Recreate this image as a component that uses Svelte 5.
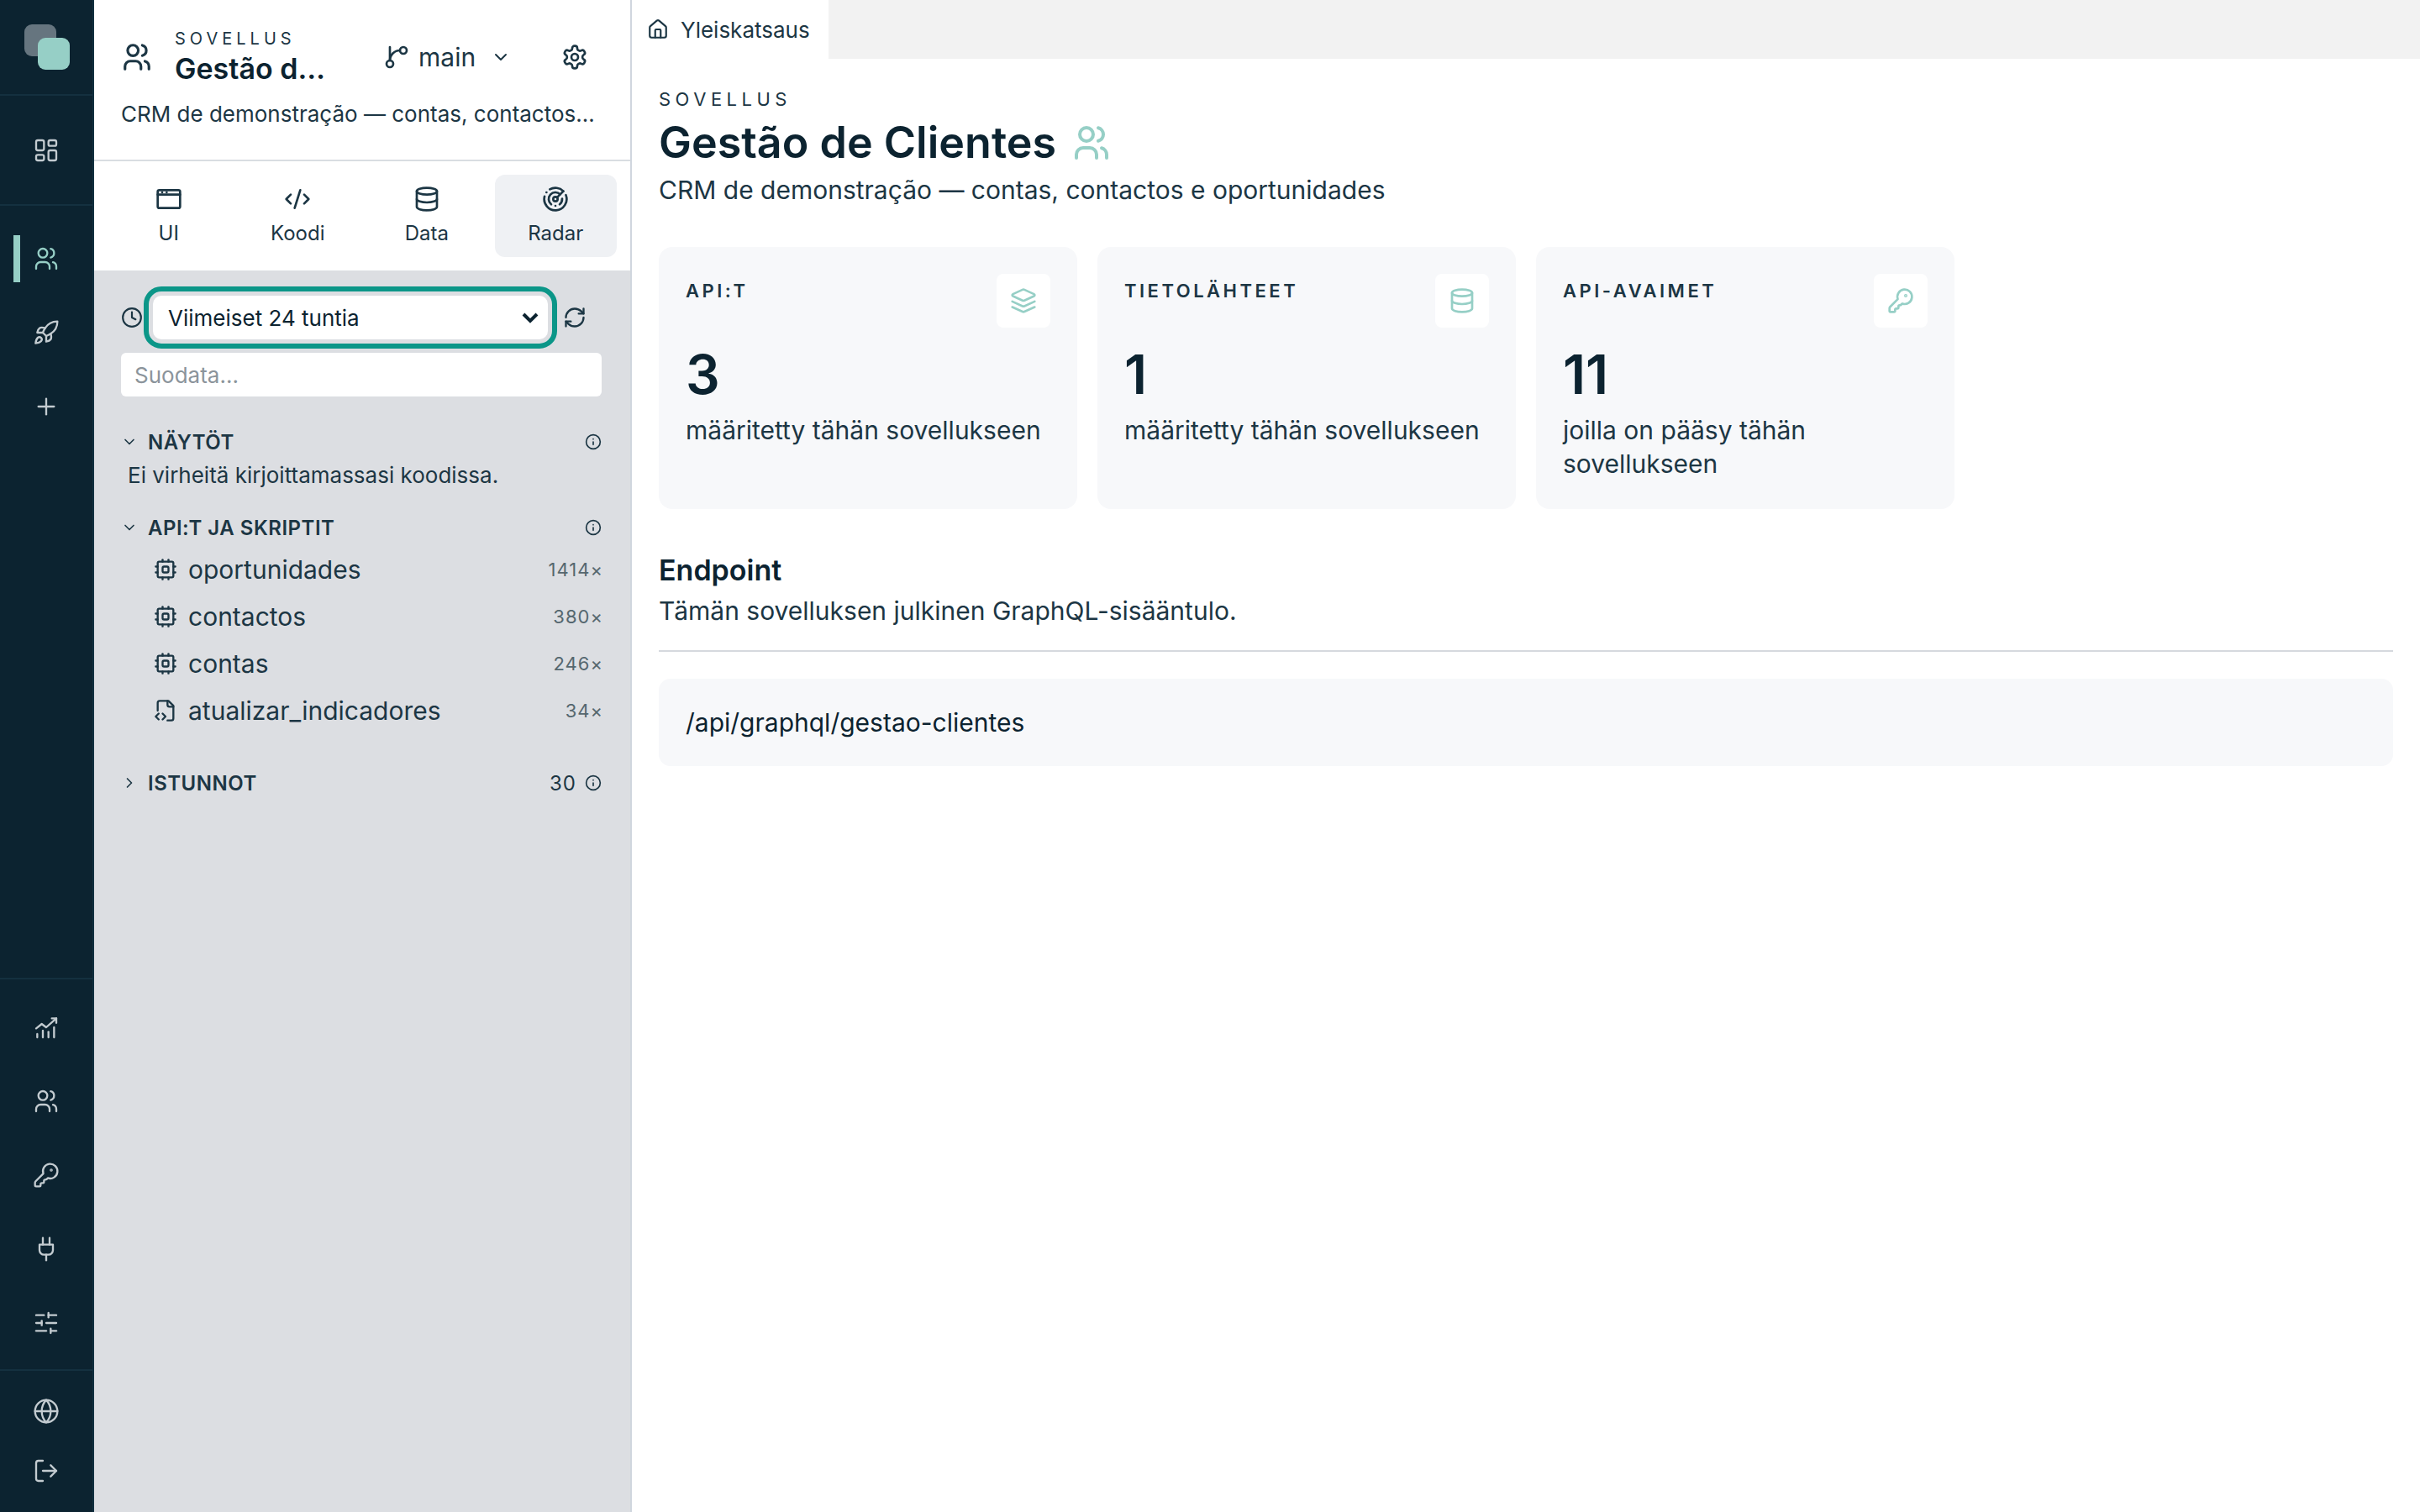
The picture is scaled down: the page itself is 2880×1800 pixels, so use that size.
<script lang="ts">
  const icons: Record<string, string[]> = {
    dashboard: ['R3 3 7 9', 'R14 3 7 5', 'R14 12 7 9', 'R3 16 7 5'],
    users: ['M3 21v-2a4 4 0 0 1 4-4h4a4 4 0 0 1 4 4v2', 'C9 7 4', 'M16 3.13a4 4 0 0 1 0 7.75', 'M21 21v-2a4 4 0 0 0-3-3.85'],
    rocket: [
      'M4.5 16.5c-1.5 1.26-2 5-2 5s3.74-.5 5-2c.71-.84.7-2.13-.09-2.91a2.18 2.18 0 0 0-2.91-.09z',
      'm12 15-3-3a22 22 0 0 1 2-3.95A12.88 12.88 0 0 1 22 2c0 2.72-.78 7.5-6 11a22.35 22.35 0 0 1-4 2z',
      'M9 12H4s.55-3.03 2-4c1.62-1.08 5 0 5 0',
      'M12 15v5s3.03-.55 4-2c1.08-1.62 0-5 0-5'
    ],
    plus: ['M5 12h14', 'M12 5v14'],
    chart: ['M3 13l5-4 4 3 9-8', 'M17 4h4v4', 'M4 21v-3', 'M9 21v-6', 'M14 21v-5', 'M19 21v-9'],
    key: [
      'M2.586 17.414A2 2 0 0 0 2 18.828V21a1 1 0 0 0 1 1h3a1 1 0 0 0 1-1v-1a1 1 0 0 1 1-1h1a1 1 0 0 0 1-1v-1a1 1 0 0 1 1-1h.172a2 2 0 0 0 1.414-.586l.814-.814a6.5 6.5 0 1 0-4-4z',
      'C16.5 7.5 .5'
    ],
    plug: ['M12 22v-5', 'M9 8V2', 'M15 8V2', 'M18 8v5a4 4 0 0 1-4 4h-4a4 4 0 0 1-4-4V8Z'],
    sliders: ['M21 5h-7', 'M10 5H3', 'M21 12h-9', 'M8 12H3', 'M21 19h-5', 'M12 19H3', 'M14 3v4', 'M8 10v4', 'M16 17v4'],
    globe: ['C12 12 10', 'M12 2a14.5 14.5 0 0 0 0 20 14.5 14.5 0 0 0 0-20', 'M2 12h20'],
    logout: ['M9 21H5a2 2 0 0 1-2-2V5a2 2 0 0 1 2-2h4', 'm16 17 5-5-5-5', 'M21 12H9'],
    branch: ['M6 15V3', 'C6 18 3', 'C18 6 3', 'M15 6a9 9 0 0 0-9 9'],
    chevronDown: ['m6 9 6 6 6-6'],
    chevronRight: ['m9 18 6-6-6-6'],
    gear: [
      'M12.22 2h-.44a2 2 0 0 0-2 2v.18a2 2 0 0 1-1 1.73l-.43.25a2 2 0 0 1-2 0l-.15-.08a2 2 0 0 0-2.73.73l-.22.38a2 2 0 0 0 .73 2.73l.15.1a2 2 0 0 1 1 1.72v.51a2 2 0 0 1-1 1.74l-.15.09a2 2 0 0 0-.73 2.73l.22.38a2 2 0 0 0 2.73.73l.15-.08a2 2 0 0 1 2 0l.43.25a2 2 0 0 1 1 1.73V20a2 2 0 0 0 2 2h.44a2 2 0 0 0 2-2v-.18a2 2 0 0 1 1-1.73l.43-.25a2 2 0 0 1 2 0l.15.08a2 2 0 0 0 2.73-.73l.22-.39a2 2 0 0 0-.73-2.73l-.15-.08a2 2 0 0 1-1-1.74v-.5a2 2 0 0 1 1-1.74l.15-.09a2 2 0 0 0 .73-2.73l-.22-.38a2 2 0 0 0-2.73-.73l-.15.08a2 2 0 0 1-2 0l-.43-.25a2 2 0 0 1-1-1.73V4a2 2 0 0 0-2-2z',
      'C12 12 3'
    ],
    window: ['R2 4 20 16', 'M2 8h20', 'M6 6h.01', 'M10 6h.01'],
    code: ['m18 16 4-4-4-4', 'm6 8-4 4 4 4', 'm14.5 4-5 16'],
    database: ['M3 5a9 3 0 1 0 18 0a9 3 0 1 0-18 0', 'M3 5V19A9 3 0 0 0 21 19V5', 'M3 12A9 3 0 0 0 21 12'],
    radar: [
      'M19.07 4.93A10 10 0 0 0 6.99 3.34',
      'M4 6h.01',
      'M2.29 9.62A10 10 0 1 0 21.31 8.35',
      'M16.24 7.76A6 6 0 1 0 8.23 16.67',
      'M12 18h.01',
      'M17.99 11.66A6 6 0 0 1 15.77 16.67',
      'C12 12 2',
      'm13.41 10.59 5.66-5.66'
    ],
    clock: ['C12 12 10', 'M12 6v6l4 2'],
    refresh: ['M3 12a9 9 0 0 1 9-9 9.75 9.75 0 0 1 6.74 2.74L21 8', 'M21 3v5h-5', 'M21 12a9 9 0 0 1-9 9 9.75 9.75 0 0 1-6.74-2.74L3 16', 'M8 16H3v5'],
    info: ['C12 12 10', 'M12 16v-4', 'M12 8h.01'],
    cpu: ['R4 4 16 16', 'R9 9 6 6', 'M15 2v2', 'M15 20v2', 'M2 15h2', 'M2 9h2', 'M20 15h2', 'M20 9h2', 'M9 2v2', 'M9 20v2'],
    fileCode: ['M4 12V4a2 2 0 0 1 2-2h9l5 5v13a2 2 0 0 1-2 2h-4', 'M14 2v4a2 2 0 0 0 2 2h4', 'm5 15-3 3 3 3', 'm9 21 3-3-3-3'],
    home: ['M15 21v-8a1 1 0 0 0-1-1h-4a1 1 0 0 0-1 1v8', 'M3 10a2 2 0 0 1 .709-1.528l7-5.999a2 2 0 0 1 2.582 0l7 5.999A2 2 0 0 1 21 10v9a2 2 0 0 1-2 2H5a2 2 0 0 1-2-2z'],
    layers: [
      'm12.83 2.18a2 2 0 0 0-1.66 0L2.6 6.08a1 1 0 0 0 0 1.83l8.58 3.91a2 2 0 0 0 1.66 0l8.58-3.9a1 1 0 0 0 0-1.83Z',
      'm22 17.65-9.17 4.16a2 2 0 0 1-1.66 0L2 17.65',
      'm22 12.65-9.17 4.16a2 2 0 0 1-1.66 0L2 12.65'
    ]
  };

  const tabs = [
    { icon: 'window', label: 'UI' },
    { icon: 'code', label: 'Koodi' },
    { icon: 'database', label: 'Data' },
    { icon: 'radar', label: 'Radar', active: true }
  ];

  const apis = [
    { icon: 'cpu', name: 'oportunidades', count: '1414×' },
    { icon: 'cpu', name: 'contactos', count: '380×' },
    { icon: 'cpu', name: 'contas', count: '246×' },
    { icon: 'fileCode', name: 'atualizar_indicadores', count: '34×' }
  ];

  const cards = [
    { label: 'API:T', icon: 'layers', value: '3', text: 'määritetty tähän sovellukseen' },
    { label: 'TIETOLÄHTEET', icon: 'database', value: '1', text: 'määritetty tähän sovellukseen' },
    { label: 'API-AVAIMET', icon: 'key', value: '11', text: 'joilla on pääsy tähän sovellukseen' }
  ];

  const toolIcons = ['chart', 'users', 'key', 'plug', 'sliders'];
</script>

{#snippet icon(name: string, size: number, stroke = 2)}
  <svg width={size} height={size} viewBox="0 0 24 24" fill="none" stroke="currentColor" stroke-width={stroke} stroke-linecap="round" stroke-linejoin="round">
    {#each icons[name] as d}
      {#if d[0] === 'C'}
        {@const c = d.slice(1).trim().split(' ')}
        <circle cx={c[0]} cy={c[1]} r={c[2]} />
      {:else if d[0] === 'R'}
        {@const r = d.slice(1).trim().split(' ')}
        <rect x={r[0]} y={r[1]} width={r[2]} height={r[3]} rx="1.5" />
      {:else}
        <path {d} />
      {/if}
    {/each}
  </svg>
{/snippet}

{#snippet sectionHead(open: boolean, title: string, count?: string)}
  <div class="sec-head">
    <span class="sec-chev">{@render icon(open ? 'chevronDown' : 'chevronRight', 20, 2)}</span>
    <span class="sec-title">{title}</span>
    {#if count}<span class="sec-count">{count}</span>{/if}
    <span class="sec-info">{@render icon('info', 20, 2)}</span>
  </div>
{/snippet}

<div class="app">
  <nav class="rail">
    <div class="rail-logo">
      <span class="logo-back"></span>
      <span class="logo-front"></span>
    </div>
    <div class="rail-dash">
      <span class="rail-item">{@render icon('dashboard', 32, 1.75)}</span>
    </div>
    <div class="rail-main">
      <span class="rail-item rail-item--active">{@render icon('users', 32, 1.75)}</span>
      <span class="rail-item">{@render icon('rocket', 32, 1.75)}</span>
      <span class="rail-item">{@render icon('plus', 32, 1.75)}</span>
    </div>
    <div class="rail-tools">
      {#each toolIcons as t}
        <span class="rail-item">{@render icon(t, 32, 1.75)}</span>
      {/each}
    </div>
    <div class="rail-foot">
      <span class="rail-item rail-item--short">{@render icon('globe', 32, 1.75)}</span>
      <span class="rail-item rail-item--short">{@render icon('logout', 32, 1.75)}</span>
    </div>
  </nav>

  <aside class="side">
    <header class="side-head">
      <div class="side-top">
        <span class="side-users">{@render icon('users', 38, 2)}</span>
        <div class="side-name">
          <div class="eyebrow">SOVELLUS</div>
          <div class="side-title">Gestão de Clientes</div>
        </div>
        <div class="branch">
          {@render icon('branch', 32, 2)}
          <span>main</span>
          <span class="branch-chev">{@render icon('chevronDown', 24, 2)}</span>
        </div>
        <span class="gear">{@render icon('gear', 32, 2)}</span>
      </div>
      <div class="side-desc">CRM de demonstração — contas, contactos e oportunidades</div>
    </header>

    <div class="tabs">
      {#each tabs as t}
        <div class="tab" class:tab--active={t.active}>
          {@render icon(t.icon, 32, 2)}
          <span>{t.label}</span>
        </div>
      {/each}
    </div>

    <div class="radar">
      <div class="range">
        <span class="range-clock">{@render icon('clock', 26, 2)}</span>
        <div class="select-wrap">
          <select class="select">
            <option>Viimeiset 24 tuntia</option>
          </select>
          <svg class="select-arrow" width="20" height="14" viewBox="0 0 20 14" fill="none" stroke="currentColor" stroke-width="4">
            <path d="M2 3l8 8 8-8" />
          </svg>
        </div>
        <span class="refresh">{@render icon('refresh', 28, 2)}</span>
      </div>
      <input class="filter" placeholder="Suodata..." />

      <section class="sec sec--first">
        {@render sectionHead(true, 'NÄYTÖT')}
        <p class="sec-empty">Ei virheitä kirjoittamassasi koodissa.</p>
      </section>

      <section class="sec sec--api">
        {@render sectionHead(true, 'API:T JA SKRIPTIT')}
        <ul class="rows">
          {#each apis as a}
            <li class="row">
              {@render icon(a.icon, 28, 2)}
              <span class="row-name">{a.name}</span>
              <span class="row-count">{a.count}</span>
            </li>
          {/each}
        </ul>
      </section>

      <section class="sec sec--sessions">
        {@render sectionHead(false, 'ISTUNNOT', '30')}
      </section>
    </div>
  </aside>

  <main class="main">
    <div class="tabbar">
      <div class="doc-tab">
        {@render icon('home', 26, 2)}
        <span>Yleiskatsaus</span>
      </div>
    </div>
    <div class="content">
      <div class="eyebrow eyebrow--main">SOVELLUS</div>
      <h1 class="title">
        Gestão de Clientes
        <span class="title-icon">{@render icon('users', 48, 2)}</span>
      </h1>
      <p class="lead">CRM de demonstração — contas, contactos e oportunidades</p>

      <div class="cards">
        {#each cards as c}
          <article class="card">
            <div class="card-top">
              <span class="card-label">{c.label}</span>
              <span class="card-icon">{@render icon(c.icon, 32, 2)}</span>
            </div>
            <div class="card-value">{c.value}</div>
            <p class="card-text">{c.text}</p>
          </article>
        {/each}
      </div>

      <h2 class="h2">Endpoint</h2>
      <p class="h2-sub">Tämän sovelluksen julkinen GraphQL-sisääntulo.</p>
      <div class="endpoint">/api/graphql/gestao-clientes</div>
    </div>
  </main>
</div>

<style>
  :global(body) {
    margin: 0;
    background: #fff;
  }

  .app {
    display: flex;
    width: 2880px;
    height: 1800px;
    overflow: hidden;
    font-family: Inter, 'Liberation Sans', sans-serif;
    color: #1c3644;
  }

  /* Rail */
  .rail {
    flex: none;
    width: 112px;
    box-sizing: border-box;
    display: flex;
    flex-direction: column;
    background: #0c2330;
    border-right: 2px solid #12303f;
    color: #c3cbd0;
  }

  .rail-logo {
    position: relative;
    height: 112px;
    flex: none;
    border-bottom: 2px solid #14303f;
  }

  .logo-back,
  .logo-front {
    position: absolute;
    width: 38px;
    height: 38px;
    border-radius: 9px;
  }

  .logo-back {
    left: 29px;
    top: 29px;
    background: #66757f;
  }

  .logo-front {
    left: 45px;
    top: 45px;
    background: #96cfc6;
  }

  .rail-dash {
    height: 129px;
    flex: none;
    display: flex;
    align-items: center;
    justify-content: center;
    border-bottom: 2px solid #14303f;
  }

  .rail-main {
    padding-top: 19px;
  }

  .rail-tools {
    margin-top: auto;
    padding: 13px 0 11px;
    border-top: 2px solid #14303f;
  }

  .rail-foot {
    padding: 12px 0 14px;
    border-top: 2px solid #14303f;
  }

  .rail-item {
    position: relative;
    display: flex;
    align-items: center;
    justify-content: center;
    height: 88px;
  }

  .rail-item--short {
    height: 71px;
  }

  .rail-item--active {
    color: #96cfc6;
  }

  .rail-item--active::before {
    content: '';
    position: absolute;
    left: 16px;
    top: 16px;
    width: 8px;
    height: 56px;
    background: #96cfc6;
  }

  /* Sidebar */
  .side {
    flex: none;
    width: 640px;
    box-sizing: border-box;
    display: flex;
    flex-direction: column;
    background: #dcdee2;
    border-right: 2px solid #d0d6de;
  }

  .side-head {
    height: 192px;
    box-sizing: border-box;
    padding: 32px 36px 0 32px;
    background: #fff;
    border-bottom: 2px solid #d9dde2;
  }

  .side-top {
    display: flex;
    align-items: center;
  }

  .side-users {
    display: flex;
    width: 64px;
    flex: none;
    color: #1c3644;
  }

  .side-name {
    width: 212px;
    flex: none;
  }

  .eyebrow {
    font-size: 20px;
    line-height: 28px;
    letter-spacing: 5px;
    color: #1c3644;
  }

  .side-title {
    width: 198px;
    overflow: hidden;
    white-space: nowrap;
    text-overflow: ellipsis;
    font-size: 34px;
    line-height: 44px;
    font-weight: 600;
    color: #0c2330;
  }

  .branch {
    display: flex;
    align-items: center;
    gap: 10px;
    margin-left: 36px;
    font-size: 30px;
  }

  .branch-chev {
    display: flex;
    margin-left: 8px;
  }

  .gear {
    display: flex;
    margin-left: 60px;
  }

  .side-desc {
    margin-top: 14px;
    width: 566px;
    overflow: hidden;
    white-space: nowrap;
    text-overflow: ellipsis;
    font-size: 26px;
    line-height: 36px;
  }

  .tabs {
    display: grid;
    grid-template-columns: repeat(4, 1fr);
    gap: 8px;
    height: 130px;
    box-sizing: border-box;
    padding: 16px 16px 16px 16px;
    background: #fff;
  }

  .tab {
    display: flex;
    flex-direction: column;
    align-items: center;
    justify-content: center;
    gap: 10px;
    border-radius: 12px;
    font-size: 24px;
    line-height: 30px;
  }

  .tab--active {
    background: #eff1f4;
  }

  .radar {
    flex: 1;
    padding: 30px 32px 0;
  }

  .range {
    display: flex;
    align-items: center;
  }

  .range-clock {
    display: flex;
    width: 38px;
    flex: none;
  }

  .select-wrap {
    position: relative;
    width: 470px;
    height: 52px;
    flex: none;
  }

  .select {
    display: block;
    width: 100%;
    height: 100%;
    box-sizing: border-box;
    padding: 0 16px 0 18px;
    appearance: none;
    border: 0;
    border-radius: 10px;
    outline: 6px solid #0b9688;
    outline-offset: 5px;
    background: #fff;
    font-family: inherit;
    font-size: 26px;
    color: #0c2330;
  }

  .select-arrow {
    position: absolute;
    right: 11px;
    top: 19px;
    color: #0c2330;
    pointer-events: none;
  }

  .refresh {
    display: flex;
    align-items: center;
    justify-content: center;
    flex: none;
    width: 54px;
    height: 52px;
    margin-left: 5px;
  }

  .filter {
    display: block;
    box-sizing: border-box;
    width: 572px;
    height: 52px;
    margin-top: 16px;
    padding: 0 16px;
    border: 0;
    border-radius: 6px;
    background: #fff;
    font-family: inherit;
    font-size: 26px;
    color: #0c2330;
  }

  .filter::placeholder {
    color: #8b949b;
    opacity: 1;
  }

  .sec--first {
    margin-top: 40px;
  }

  .sec--api {
    margin-top: 30px;
  }

  .sec--sessions {
    margin-top: 44px;
  }

  .sec-head {
    display: flex;
    align-items: center;
    height: 28px;
    padding-right: 0;
  }

  .sec-chev {
    display: flex;
    width: 32px;
    flex: none;
    margin-left: 0;
  }

  .sec-title {
    flex: 1;
    font-size: 24px;
    font-weight: 600;
    letter-spacing: 0.5px;
  }

  .sec-count {
    margin-right: 10px;
    font-size: 24px;
    letter-spacing: 1px;
  }

  .sec-info {
    display: flex;
    margin-right: 2px;
  }

  .sec-empty {
    margin: 8px 0 0 8px;
    font-size: 26px;
    line-height: 36px;
  }

  .rows {
    list-style: none;
    margin: 8px 0 0;
    padding: 0;
  }

  .row {
    display: flex;
    align-items: center;
    height: 56px;
    padding-left: 39px;
  }

  .row-name {
    flex: 1;
    margin-left: 13px;
    font-size: 30px;
  }

  .row-count {
    font-size: 22px;
    letter-spacing: 1px;
    color: #55676f;
  }

  /* Main */
  .main {
    flex: 1;
    min-width: 0;
    background: #fff;
  }

  .tabbar {
    display: flex;
    height: 70px;
    background: #f2f2f2;
  }

  .doc-tab {
    display: flex;
    align-items: center;
    gap: 14px;
    width: 234px;
    box-sizing: border-box;
    padding-left: 18px;
    background: #fff;
    font-size: 26px;
  }

  .content {
    padding: 32px 32px 0;
  }

  .eyebrow--main {
    font-size: 22px;
    line-height: 32px;
    letter-spacing: 5.5px;
  }

  .title {
    display: flex;
    align-items: center;
    gap: 18px;
    margin: 4px 0 0;
    font-size: 52px;
    line-height: 64px;
    font-weight: 600;
    color: #0c2330;
  }

  .title-icon {
    display: flex;
    color: #96cfc6;
  }

  .lead {
    margin: 4px 0 0;
    font-size: 30px;
    line-height: 40px;
  }

  .cards {
    display: grid;
    grid-template-columns: repeat(3, 1fr);
    gap: 24px;
    width: 1542px;
    margin-top: 48px;
  }

  .card {
    height: 312px;
    box-sizing: border-box;
    padding: 32px;
    border-radius: 16px;
    background: #f7f8fa;
  }

  .card-top {
    display: flex;
    justify-content: space-between;
    align-items: flex-start;
    height: 64px;
  }

  .card-label {
    margin-top: 4px;
    font-size: 22px;
    line-height: 32px;
    font-weight: 600;
    letter-spacing: 3.5px;
  }

  .card-icon {
    display: flex;
    align-items: center;
    justify-content: center;
    width: 64px;
    height: 64px;
    border-radius: 8px;
    background: #fff;
    color: #96cfc6;
  }

  .card-value {
    margin-top: 20px;
    font-size: 64px;
    line-height: 72px;
    font-weight: 600;
    color: #0c2330;
  }

  .card-text {
    margin: 10px 0 0;
    font-size: 30px;
    line-height: 40px;
  }

  .h2 {
    margin: 50px 0 0;
    font-size: 34px;
    line-height: 46px;
    font-weight: 600;
    color: #0c2330;
  }

  .h2-sub {
    margin: 4px 0 0;
    padding-bottom: 26px;
    border-bottom: 2px solid #d5d9de;
    font-size: 30px;
    line-height: 42px;
  }

  .endpoint {
    display: flex;
    align-items: center;
    height: 104px;
    box-sizing: border-box;
    margin-top: 32px;
    padding: 0 32px;
    border-radius: 14px;
    background: #f7f8fa;
    font-size: 30px;
    color: #0c2330;
  }
</style>
